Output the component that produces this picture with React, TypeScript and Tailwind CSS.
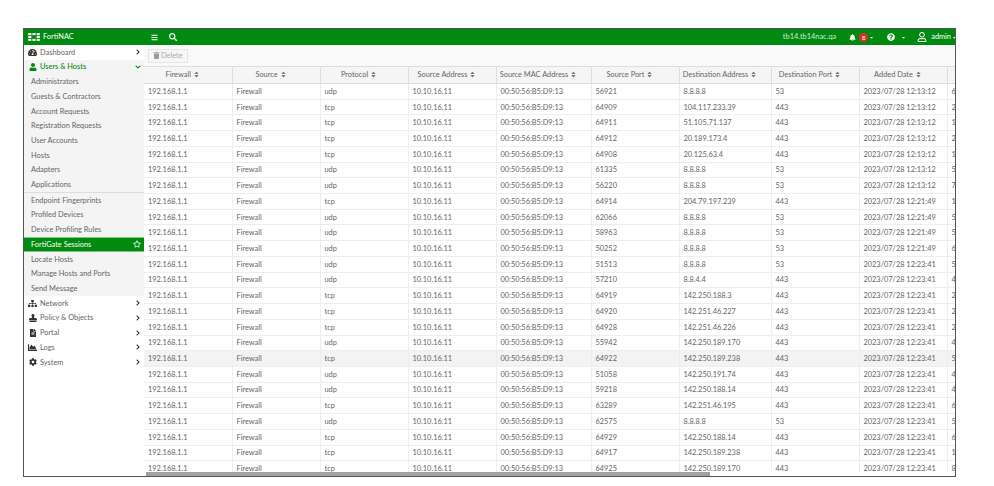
import { FaBars, FaBell, FaChartArea, FaChevronDown, FaChevronRight, FaCog, FaQuestionCircle, FaRegStar, FaRegUser, FaSearch, FaSitemap, FaSort, FaStamp, FaTachometerAlt, FaTrash, FaUser, FaFileAlt, FaCaretDown } from "react-icons/fa";
import type { ReactNode } from "react";

const columns = [
  { label: "Firewall", width: "w-[88px]" },
  { label: "Source", width: "w-[88px]" },
  { label: "Protocol", width: "w-[88px]" },
  { label: "Source Address", width: "w-[88px]" },
  { label: "Source MAC Address", width: "w-[95px]" },
  { label: "Source Port", width: "w-[88px]" },
  { label: "Destination Address", width: "w-[92px]" },
  { label: "Destination Port", width: "w-[88px]" },
  { label: "Added Date", width: "w-[88px]" },
  { label: "", width: "w-[48px]" },
];

// proto, port, destination, dest port, date, last column
const rows = [
  ["udp", "56921", "8.8.8.8", "53", "2023/07/28 12:13:12", "6"],
  ["tcp", "64909", "104.117.233.39", "443", "2023/07/28 12:13:12", "2"],
  ["tcp", "64911", "51.105.71.137", "443", "2023/07/28 12:13:12", "1"],
  ["tcp", "64912", "20.189.173.4", "443", "2023/07/28 12:13:12", "2"],
  ["tcp", "64908", "20.125.63.4", "443", "2023/07/28 12:13:12", "1"],
  ["udp", "61335", "8.8.8.8", "53", "2023/07/28 12:13:12", "5"],
  ["udp", "56220", "8.8.8.8", "53", "2023/07/28 12:13:12", "7"],
  ["tcp", "64914", "204.79.197.239", "443", "2023/07/28 12:21:49", "1"],
  ["udp", "62066", "8.8.8.8", "53", "2023/07/28 12:21:49", "5"],
  ["udp", "58963", "8.8.8.8", "53", "2023/07/28 12:21:49", "5"],
  ["udp", "50252", "8.8.8.8", "53", "2023/07/28 12:21:49", "6"],
  ["udp", "51513", "8.8.8.8", "53", "2023/07/28 12:23:41", "5"],
  ["udp", "57210", "8.8.4.4", "443", "2023/07/28 12:23:41", "4"],
  ["tcp", "64919", "142.250.188.3", "443", "2023/07/28 12:23:41", "2"],
  ["tcp", "64920", "142.251.46.227", "443", "2023/07/28 12:23:41", "2"],
  ["tcp", "64928", "142.251.46.226", "443", "2023/07/28 12:23:41", "2"],
  ["udp", "55942", "142.250.189.170", "443", "2023/07/28 12:23:41", "4"],
  ["tcp", "64922", "142.250.189.238", "443", "2023/07/28 12:23:41", "5"],
  ["udp", "51058", "142.250.191.74", "443", "2023/07/28 12:23:41", "4"],
  ["udp", "59218", "142.250.188.14", "443", "2023/07/28 12:23:41", "4"],
  ["tcp", "63289", "142.251.46.195", "443", "2023/07/28 12:23:41", "6"],
  ["udp", "62575", "8.8.8.8", "53", "2023/07/28 12:23:41", "5"],
  ["tcp", "64929", "142.250.188.14", "443", "2023/07/28 12:23:41", "6"],
  ["tcp", "64917", "142.250.189.238", "443", "2023/07/28 12:23:41", "1"],
  ["tcp", "64925", "142.250.189.170", "443", "2023/07/28 12:23:41", "8"],
];

const userItems = ["Administrators", "Guests & Contractors", "Account Requests", "Registration Requests", "User Accounts", "Hosts", "Adapters", "Applications"];
const deviceItems = ["Endpoint Fingerprints", "Profiled Devices", "Device Profiling Rules"];
const hostItems = ["Locate Hosts", "Manage Hosts and Ports", "Send Message"];

const MenuItem = ({ icon, label }: { icon: ReactNode; label: string }) => (
  <div className="flex h-[14.7px] items-center pl-[4px] pr-[3px]">
    <span className="flex w-[9px] justify-center">{icon}</span>
    <span className="ml-[3px] flex-1">{label}</span>
    <FaChevronRight size={6} className="text-[#222]" />
  </div>
);

const SubItem = ({ label }: { label: string }) => (
  <div className="flex h-[14.7px] items-center pl-[7px]">{label}</div>
);

const Logo = () => (
  <svg width="12" height="8" viewBox="0 0 13 9" fill="#fff">
    <rect x="0" y="0" width="3.5" height="2.4" />
    <rect x="4.7" y="0" width="3.6" height="2.4" />
    <rect x="9.5" y="0" width="3.5" height="2.4" />
    <rect x="0" y="3.3" width="3.5" height="2.4" />
    <rect x="9.5" y="3.3" width="3.5" height="2.4" />
    <rect x="0" y="6.6" width="3.5" height="2.4" />
    <rect x="4.7" y="6.6" width="3.6" height="2.4" />
    <rect x="9.5" y="6.6" width="3.5" height="2.4" />
  </svg>
);

export default function App() {
  return (
    <div className="h-[486px] w-[994px] bg-white pl-[23px] pr-[38px] pt-[28px] pb-[9px] font-['Lato','Liberation_Sans',sans-serif] text-[7.4px] text-[#666]">
      <div className="flex h-full flex-col overflow-hidden border border-[#555]">
        <header className="flex h-[16px] shrink-0 items-center bg-[#008a0f] text-white">
          <div className="flex w-[120px] items-center pl-[4px]">
            <Logo />
            <span className="ml-[3px]">FortiNAC</span>
          </div>
          <FaBars size={7} className="ml-[7px]" />
          <FaSearch size={8} className="ml-[11px]" />
          <span className="ml-auto text-[#cfe8d1]">tb14.tb14nac.qa</span>
          <FaBell size={7} className="ml-[13px]" />
          <span className="ml-[3px] flex h-[9px] w-[9px] items-center justify-center rounded-full bg-[#d9302c] text-[6px]">8</span>
          <FaCaretDown size={5} className="ml-[1px]" />
          <FaQuestionCircle size={8} className="ml-[13px]" />
          <FaCaretDown size={5} className="ml-[6px]" />
          <FaRegUser size={10} className="ml-[11px]" />
          <span className="ml-[4px]">admin</span>
          <FaCaretDown size={5} className="ml-[1px] mr-[-2px]" />
        </header>

        <div className="flex min-h-0 flex-1">
          <nav className="w-[120px] shrink-0">
            <MenuItem icon={<FaTachometerAlt size={9} className="text-[#333]" />} label="Dashboard" />
            <div className="flex h-[14.7px] items-center bg-[#f4f4f4] pl-[4px] pr-[3px] font-medium text-[#008a0f]">
              <span className="flex w-[9px] justify-center"><FaUser size={8} /></span>
              <span className="ml-[3px] flex-1">Users &amp; Hosts</span>
              <FaChevronDown size={6} />
            </div>
            <div className="bg-[#f4f4f4]">
              {userItems.map((item) => (
                <SubItem key={item} label={item} />
              ))}
              <div className="border-t border-[#ddd]">
                {deviceItems.map((item) => (
                  <SubItem key={item} label={item} />
                ))}
              </div>
              <div className="flex h-[15px] items-center justify-between border-y border-[#7fc487] bg-[#008a0f] pl-[7px] pr-[3px] text-white">
                FortiGate Sessions
                <FaRegStar size={8} />
              </div>
              {hostItems.map((item) => (
                <SubItem key={item} label={item} />
              ))}
            </div>
            <MenuItem icon={<FaSitemap size={9} className="text-[#333]" />} label="Network" />
            <MenuItem icon={<FaStamp size={8} className="text-[#333]" />} label="Policy & Objects" />
            <MenuItem icon={<FaFileAlt size={8} className="text-[#333]" />} label="Portal" />
            <MenuItem icon={<FaChartArea size={9} className="text-[#333]" />} label="Logs" />
            <MenuItem icon={<FaCog size={8} className="text-[#333]" />} label="System" />
          </nav>

          <main className="flex min-w-0 flex-1 flex-col">
            <div className="flex h-[21px] shrink-0 items-center bg-[#f9f9f9] pl-[4px]">
              <button className="flex h-[14px] items-center gap-[1px] border border-[#e6e6e6] bg-[#f6f6f6] px-[4px] text-[#aaa]">
                <FaTrash size={7} className="text-[#999]" />
                Delete
              </button>
            </div>
            <div className="min-h-0 flex-1 overflow-hidden">
              <table className="w-[851px] table-fixed border-collapse">
                <thead>
                  <tr className="h-[17px] bg-[#f5f5f5]">
                    {columns.map((c) => (
                      <th key={c.label} className={`${c.width} overflow-hidden whitespace-nowrap border-y border-r border-[#ddd] pr-[10px] text-center font-normal`}>
                        <span className="inline-flex items-center gap-[2px]">
                          {c.label}
                          {c.label && <FaSort size={7} className="text-[#777]" />}
                        </span>
                      </th>
                    ))}
                  </tr>
                </thead>
                <tbody>
                  {rows.map((r, i) => (
                    <tr key={i} className={`h-[15.72px] border-b border-[#eee] ${i === 17 ? "bg-[#f3f3f3]" : ""}`}>
                      <td className="border-r border-[#eee] pl-[4px]">192.168.1.1</td>
                      <td className="border-r border-[#eee] pl-[4px]">Firewall</td>
                      <td className="border-r border-[#eee] pl-[4px]">{r[0]}</td>
                      <td className="border-r border-[#eee] pl-[4px]">10.10.16.11</td>
                      <td className="border-r border-[#eee] pl-[4px] whitespace-nowrap">00:50:56:B5:D9:13</td>
                      <td className="border-r border-[#eee] pl-[4px]">{r[1]}</td>
                      <td className="border-r border-[#eee] pl-[4px]">{r[2]}</td>
                      <td className="border-r border-[#eee] pl-[4px]">{r[3]}</td>
                      <td className="border-r border-[#eee] pl-[4px] whitespace-nowrap">{r[4]}</td>
                      <td className="pl-[4px]">{r[5]}</td>
                    </tr>
                  ))}
                </tbody>
              </table>
            </div>
            <div className="h-[4px] shrink-0 bg-white pl-[2px]">
              <div className="h-full w-[564px] bg-[#a3a3a3]" />
            </div>
          </main>
        </div>
      </div>
    </div>
  );
}
